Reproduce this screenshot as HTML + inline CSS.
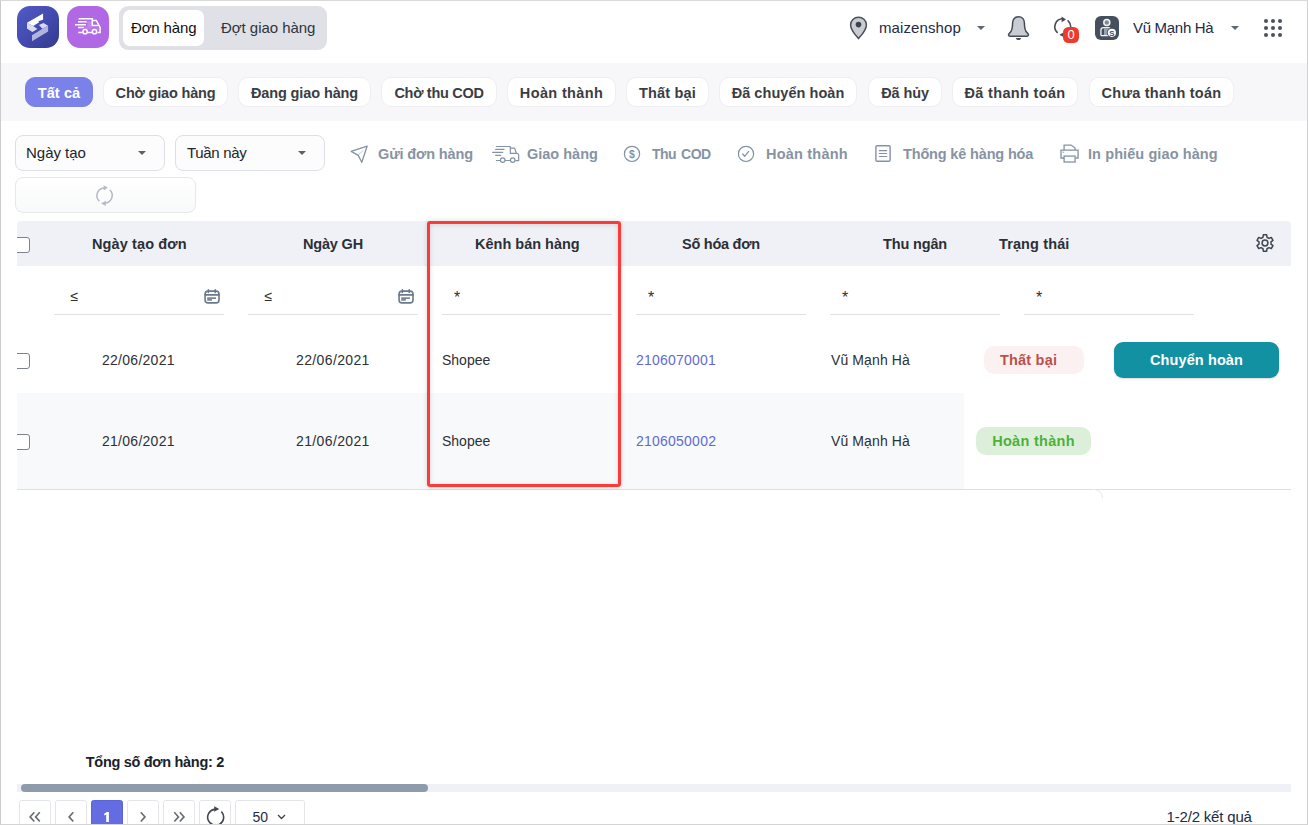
<!DOCTYPE html>
<html>
<head>
<meta charset="utf-8">
<style>
*{box-sizing:border-box;margin:0;padding:0}
html,body{width:1308px;height:825px;overflow:hidden;background:#fff}
body{font-family:"Liberation Sans",sans-serif;color:#212529;position:relative}
.abs{position:absolute}
.t{position:absolute;white-space:nowrap;line-height:20px;height:20px}
#frame{position:absolute;left:0;top:0;width:1308px;height:825px;border:1px solid #d4d4d4;border-color:#d9d9d9 #d0d0d0 #d4d4d4 #cccccc;z-index:50;pointer-events:none}
/* header */
.logo{position:absolute;top:6px;width:42px;height:42px;border-radius:13px}
#seg{position:absolute;left:119px;top:6px;width:208px;height:44px;border-radius:9px;background:#dfe1e6}
#segact{position:absolute;left:123px;top:10px;width:81px;height:36px;border-radius:7px;background:#fff}
/* band */
#band{position:absolute;left:0;top:63px;width:1308px;height:58px;background:#f7f7f9}
.pill{position:absolute;top:77px;height:30px;border-radius:10px;background:#fff;border:1px solid #eeeef2;font-weight:bold;font-size:14.5px;line-height:30px;letter-spacing:-0.5px;text-align:center;color:#3a3d42;white-space:nowrap}
.pill.act{background:#7a82ea;border-color:#7a82ea;color:#fff}
/* filters */
.sel{position:absolute;top:135px;height:36px;width:150px;border:1px solid #dcdfe5;border-radius:8px;background:#fcfcfd}
.sel span{position:absolute;left:10px;top:7px;font-size:15px;line-height:20px;color:#212529}
.sel i{position:absolute;right:18px;top:15px;border-left:4.500px solid transparent;border-right:4.500px solid transparent;border-top:4.500px solid #5a626c}
.tb{position:absolute;top:144px;font-weight:bold;font-size:14.5px;line-height:20px;color:#8793a3;white-space:nowrap}
/* table */
#thead{position:absolute;left:17px;top:221px;width:1274px;height:45px;background:#f0f1f6;border-radius:4px 4px 0 0}
.th{position:absolute;top:234px;font-weight:bold;font-size:14.5px;line-height:20px;color:#2b2f36;white-space:nowrap}
.fl{position:absolute;top:314px;height:1px;background:#dfe2e7;width:170px}
.td{position:absolute;font-size:14px;line-height:20px;color:#2d3035;white-space:nowrap}
.lnk{color:#5f6bd0}
.cb{position:absolute;left:14px;width:16px;height:16px;border:1px solid #7d838b;border-radius:3px;background:#fff}
.pg{position:absolute;top:800px;width:32px;height:34px;border:1px solid #e3e5e9;border-radius:2.500px;background:#fff}
.pg svg{display:block;margin:-1px 0 0 -1px}
.st{font-size:16px}
</style>
</head>
<body>
<!-- header -->
<div class="logo" id="logo1" style="left:17px;background:linear-gradient(135deg,#515bc8 0%,#434bb0 50%,#343a8e 100%)">
<svg width="42" height="42" viewBox="0 0 42 42"><polygon points="26.100,7.600 26.100,13.650 21.300,15.200 22.200,16.300 16.200,19.900 10,16.700" fill="#fff"/><polygon points="10,16.700 16.200,19.900 20.400,23 15.300,26 10,22.400" fill="#dcdcf0"/><polygon points="21.900,18.900 26.500,17.050 31.100,19.750 25.450,22.800" fill="#d7d7ee"/><polygon points="31.100,19.750 31.100,25.450 15,35.150 15,29.300 25.450,22.800" fill="#b3b4dc"/></svg>
</div>
<div class="logo" id="logo2" style="left:67px;background:#b068e4">
<svg width="42" height="42" viewBox="0 0 42 42" fill="none" stroke="#fff" stroke-width="1.500" stroke-linecap="square" stroke-linejoin="miter"><path d="M20.400 15.300h4.200v8.200h-7v-2.800h2.800z" fill="#c286ee" stroke="none"/><path d="M17.500 21.500h15v2.500h-15z" fill="#bb7aea" stroke="none"/><path d="M12.300 12.700h13v6.900h6.300M25.300 14.500h4l3.800 6.900v5h-1.900M11.800 15.800h7.200M8.700 18.700h9.600M11.800 21.600h4.400M12 26.400h2.800M21.400 26.400h2.800"/><circle cx="18.100" cy="25.700" r="2.100" fill="#b068e4"/><circle cx="27.500" cy="25.700" r="2.100" fill="#b068e4"/></svg>
</div>
<div id="seg"></div><div id="segact"></div>
<div class="t" id="sg1" style="left:131px;top:18px;font-size:15px;color:#111;letter-spacing:-0.15px">Đơn hàng</div>
<div class="t" id="sg2" style="left:221px;top:18px;font-size:15px;color:#2e3440;letter-spacing:-0.04px">Đợt giao hàng</div>

<div id="band"></div>
<div id="p1" class="pill act" style="left:25px;width:68px;letter-spacing:0.1px">Tất cả</div>
<div id="p2" class="pill" style="left:103px;width:125px;letter-spacing:-0.18px">Chờ giao hàng</div>
<div id="p3" class="pill" style="left:238px;width:133px;letter-spacing:-0.11px">Đang giao hàng</div>
<div id="p4" class="pill" style="left:381px;width:116px;letter-spacing:-0.3px">Chờ thu COD</div>
<div id="p5" class="pill" style="left:507px;width:109px;letter-spacing:0.36px">Hoàn thành</div>
<div id="p6" class="pill" style="left:626px;width:83px;letter-spacing:0.16px">Thất bại</div>
<div id="p7" class="pill" style="left:719px;width:138px;letter-spacing:0.05px">Đã chuyển hoàn</div>
<div id="p8" class="pill" style="left:868px;width:74px;letter-spacing:-0.1px">Đã hủy</div>
<div id="p9" class="pill" style="left:952px;width:126px;letter-spacing:0.33px">Đã thanh toán</div>
<div id="p10" class="pill" style="left:1089px;width:145px;letter-spacing:0.25px">Chưa thanh toán</div>


<!-- header right -->
<svg class="abs" style="left:849px;top:16px" width="19" height="24" viewBox="0 0 19 24"><path d="M9.5 1.2C5 1.2 1.6 4.6 1.6 8.9c0 5.2 5.6 11 7.9 13.6 2.3-2.6 7.9-8.4 7.9-13.6 0-4.3-3.4-7.7-7.9-7.7z" fill="#c9ccd2" stroke="#4a4f58" stroke-width="1.5"/><circle cx="9.5" cy="8.6" r="2.8" fill="#3d424b"/></svg>
<div class="t" id="shop" style="left:879px;top:18px;font-size:15px;color:#222b45;letter-spacing:0.11px">maizenshop</div>
<i class="abs" style="left:977px;top:26px;border-left:4px solid transparent;border-right:4px solid transparent;border-top:4.5px solid #5a6675"></i>
<svg class="abs" style="left:1006px;top:15px" width="26" height="26" viewBox="0 0 26 26"><path d="M12.500 1.700C8.900 1.700 6.600 4.500 6.600 8C6.600 12 6.300 15.500 4 17.600C2.600 18.900 2.300 19.400 2.600 20.200C2.900 21 3.600 21.300 4.600 21.300H20.400C21.400 21.300 22.100 21 22.400 20.200C22.700 19.400 22.400 18.900 21 17.600C18.700 15.500 18.400 12 18.400 8C18.400 4.500 16.100 1.700 12.500 1.700Z" fill="#c9cdd3" stroke="#454b55" stroke-width="1.500" stroke-linejoin="round"/><path d="M9.900 22.900h5.200c-.3 1.300-1.300 2.100-2.600 2.100s-2.300-.8-2.600-2.100z" fill="#454b55"/></svg>
<svg class="abs" style="left:1052px;top:16px" width="22" height="22" viewBox="0 0 22 22" fill="none" stroke="#454b55" stroke-width="1.600" stroke-linecap="round"><path d="M9.800 2.800A8 8 0 0 0 5.200 16.400"/><path d="M16.100 4.800A8 8 0 0 1 18.700 10.700"/><path d="M9.600 0.600l4.400 3-4.400 2.600z" fill="#454b55" stroke="none"/><path d="M11 16.800l-3.600 2 3.600 2z" fill="#454b55" stroke="none"/></svg>
<div class="abs" style="left:1063px;top:27px;width:16px;height:16px;border-radius:5.500px;background:#ee3a2c;color:#fff;font-size:13px;line-height:16px;text-align:center">0</div>
<div class="abs" style="left:1095px;top:16px;width:24px;height:24px;border-radius:6px;background:#454f5e"></div>
<svg class="abs" style="left:1095px;top:16px" width="24" height="24" viewBox="0 0 24 24" fill="none" stroke="#f4f5f7" stroke-width="1.300"><circle cx="11.800" cy="6.400" r="3" fill="#818a95" stroke-width="1.500"/><path d="M5.900 19.600v-5.400c0-1.500 1.200-2.600 2.700-2.600h4.600c1.300 0 2.200.600 2.600 1.600" fill="none"/><path d="M9 12.300h4.200c1 0 1.700.400 2.100 1.100-1.600.900-2.600 2.500-2.600 4.200 0 .700.200 1.400.500 2H9z" fill="#9ba4ae" stroke="none"/><path d="M5.900 19.600h7.500"/><circle cx="16.900" cy="16.800" r="5" fill="#454f5e" stroke="none"/><circle cx="16.900" cy="16.800" r="4.100" fill="#fff" stroke="none"/><text x="16.900" y="19.600" font-family="Liberation Sans" font-size="7.800" font-weight="bold" text-anchor="middle" fill="#454f5e" stroke="none">S</text></svg>
<div class="t" id="user" style="left:1133px;top:18px;font-size:15px;color:#222b45;letter-spacing:-0.3px">Vũ Mạnh Hà</div>
<i class="abs" style="left:1231px;top:26px;border-left:4px solid transparent;border-right:4px solid transparent;border-top:4.500px solid #5a6675"></i>
<svg class="abs" style="left:1263px;top:18px" width="20" height="20" viewBox="0 0 20 20" fill="#4a5361"><circle cx="3" cy="3" r="2.050"/><circle cx="10" cy="3" r="2.050"/><circle cx="17" cy="3" r="2.050"/><circle cx="3" cy="10" r="2.050"/><circle cx="10" cy="10" r="2.050"/><circle cx="17" cy="10" r="2.050"/><circle cx="3" cy="17" r="2.050"/><circle cx="10" cy="17" r="2.050"/><circle cx="17" cy="17" r="2.050"/></svg>

<!-- filters -->
<div class="sel" style="left:15px"><span id="se1" style="left:10px;letter-spacing:-0.02px">Ngày tạo</span><i></i></div>
<div class="sel" style="left:175px"><span id="se2" style="left:11px;letter-spacing:-0.33px">Tuần này</span><i></i></div>
<div class="abs" style="left:15px;top:177px;width:181px;height:36px;border:1px solid #e6e8ec;border-radius:8px;background:linear-gradient(#fff,#f8f9fa)"></div>
<svg class="abs" style="left:94px;top:185px" width="21" height="21" viewBox="0 0 21 21" fill="none" stroke="#b3bbc6" stroke-width="1.500" stroke-linecap="round"><path d="M9.600 2.950A7.650 7.650 0 0 0 4.900 15.700"/><path d="M16.200 5.300A7.700 7.700 0 0 1 11.600 18.100"/><path d="M9.600 0.300l4.300 2.400-4.300 2.700z" fill="#b3bbc6" stroke="none"/><path d="M11.800 15.800l-4.700 2.600 4.700 2.500z" fill="#b3bbc6" stroke="none"/></svg>

<!-- toolbar -->
<svg class="abs" style="left:350px;top:145px" width="19" height="19" viewBox="0 0 19 19" fill="none" stroke="#8392a5" stroke-width="1.300" stroke-linejoin="round" stroke-linecap="round"><path d="M17.100 1.200L1.200 6.400l7 4 3.600 6.900z"/><path d="M8.600 9.800l4.600-4.400" stroke-width=".8" opacity=".6"/></svg>
<div id="tb1" class="tb" style="left:378px;letter-spacing:-0.14px">Gửi đơn hàng</div>
<svg class="abs" style="left:492px;top:145px" width="28" height="19" viewBox="0 0 28 19" fill="none" stroke="#8392a5" stroke-width="1.200" stroke-linecap="round" stroke-linejoin="round"><path d="M4.400 1.500h13.900v6.900h6.300M18.300 3.100h4.200l1.900 5.100c1.400.400 2.300 1 2.300 1.800v5.600h-2.900M3.700 4.400h8.300M0.700 7.400h10M3.700 10.400h5M4.400 15.500h3.800M13.600 15.500h4.400"/><circle cx="10.700" cy="15.100" r="2.300"/><circle cx="20.700" cy="15.100" r="2.300"/></svg>
<div id="tb2" class="tb" style="left:527px;letter-spacing:0px">Giao hàng</div>
<svg class="abs" style="left:623px;top:145px" width="18" height="18" viewBox="0 0 18 18" fill="none" stroke="#8392a5" stroke-width="1.200"><circle cx="9" cy="8.900" r="7.600"/><text x="9" y="12.600" font-family="Liberation Sans" font-size="10.500" font-weight="bold" text-anchor="middle" fill="#8392a5" stroke="none">$</text></svg>
<div id="tb3" class="tb" style="left:652px;font-size:14px;word-spacing:1.5px;letter-spacing:-0.5px">Thu COD</div>
<svg class="abs" style="left:737px;top:145px" width="18" height="18" viewBox="0 0 18 18" fill="none" stroke="#8392a5" stroke-width="1.200" stroke-linecap="round" stroke-linejoin="round"><circle cx="9" cy="8.900" r="7.600"/><path d="M5.700 8.900l1.900 2.400 4.100-4.900" stroke-width="1.300"/></svg>
<div id="tb4" class="tb" style="left:766px;letter-spacing:0.21px">Hoàn thành</div>
<svg class="abs" style="left:874px;top:144px" width="18" height="19" viewBox="0 0 18 19" fill="none" stroke="#8392a5" stroke-width="1.400" stroke-linecap="round"><rect x="1.900" y="1.700" width="14.200" height="15.500" rx="1.200"/><path d="M5.400 6.600h7.300M5.400 9.500h7.300M5.400 12.500h7.300" stroke-width="1.200"/></svg>
<div id="tb5" class="tb" style="left:903px;letter-spacing:-0.16px">Thống kê hàng hóa</div>
<svg class="abs" style="left:1059px;top:143px" width="21" height="22" viewBox="0 0 21 22" fill="none" stroke="#8392a5" stroke-width="1.300" stroke-linejoin="miter"><path d="M5.100 7.200V2.100h7l4 3v2.100"/><path d="M5.100 15H2V7.200h17.100V15h-2.400"/><rect x="5.100" y="13.100" width="11" height="5.900"/><rect x="3.700" y="8.700" width="1.400" height="1" fill="#8392a5" stroke="none"/></svg>
<div id="tb6" class="tb" style="left:1088px;letter-spacing:0.09px">In phiếu giao hàng</div>
<!-- table -->
<div id="thead"></div>
<div class="abs" style="left:17px;top:393px;width:947px;height:96px;background:#f8f9fb"></div>
<div class="abs" style="left:17px;top:489px;width:1274px;height:1px;background:#dcdfe6"></div>
<div class="abs" style="left:1092px;top:489px;width:11px;height:9px;border-top:1px solid #e6e8ed;border-right:1px solid #e6e8ed;border-top-right-radius:9px"></div>
<div class="abs" style="left:17px;top:221px;width:20px;height:270px;overflow:hidden">
<div class="cb" style="left:-3px;top:16px"></div>
<div class="cb" style="left:-3px;top:132px"></div>
<div class="cb" style="left:-3px;top:213px"></div>
</div>
<div class="th" id="h1" style="left:92px;letter-spacing:0.11px">Ngày tạo đơn</div>
<div class="th" id="h2" style="left:303px;letter-spacing:-0.18px">Ngày GH</div>
<div class="th" id="h3" style="left:475px;letter-spacing:-0px">Kênh bán hàng</div>
<div class="th" id="h4" style="left:682px;letter-spacing:-0.25px">Số hóa đơn</div>
<div class="th" id="h5" style="left:883px;letter-spacing:-0.15px">Thu ngân</div>
<div class="th" id="h6" style="left:999px;letter-spacing:0.12px">Trạng thái</div>
<svg class="abs" style="left:1254px;top:232px" width="22" height="22" viewBox="0 0 22 22" fill="none" stroke="#3f4650" stroke-width="1.500" stroke-linejoin="round"><circle cx="11" cy="11" r="2.900"/><path d="M9.01 5.23L9.33 2.77L12.67 2.77L12.99 5.23L15.00 6.40L17.29 5.43L18.97 8.33L16.99 9.84L16.99 12.16L18.97 13.67L17.29 16.57L15.00 15.60L12.99 16.77L12.67 19.23L9.33 19.23L9.01 16.77L7.00 15.60L4.71 16.57L3.03 13.67L5.01 12.16L5.01 9.84L3.03 8.33L4.71 5.43L7.00 6.40Z"/></svg>

<div class="fl" style="left:54px"></div><div class="fl" style="left:248px"></div><div class="fl" style="left:442px"></div><div class="fl" style="left:636px"></div><div class="fl" style="left:830px"></div><div class="fl" style="left:1024px"></div>
<div class="td" style="left:70.5px;top:286px;font-size:14px">≤</div>
<div class="td" style="left:264.5px;top:286px;font-size:14px">≤</div>
<svg class="abs" style="left:203px;top:288px" width="18" height="17" viewBox="0 0 18 17" fill="none" stroke="#6a798b" stroke-width="1.600" stroke-linecap="round"><rect x="2.100" y="3.100" width="13.900" height="11.800" rx="3"/><path d="M2.100 6.900h13.900M5.400 1.800v2.700M12.200 1.800v2.700"/><path d="M4.200 9.300h8.800v1.700h-4.100v1.800h-4.700z" fill="#7b8998" stroke="none"/></svg><svg class="abs" style="left:397px;top:288px" width="18" height="17" viewBox="0 0 18 17" fill="none" stroke="#6a798b" stroke-width="1.600" stroke-linecap="round"><rect x="2.100" y="3.100" width="13.900" height="11.800" rx="3"/><path d="M2.100 6.900h13.900M5.400 1.800v2.700M12.200 1.800v2.700"/><path d="M4.200 9.300h8.800v1.700h-4.100v1.800h-4.700z" fill="#7b8998" stroke="none"/></svg>
<div class="td st" style="left:454px;top:288px">*</div>
<div class="td st" style="left:648px;top:288px">*</div>
<div class="td st" style="left:842px;top:288px">*</div>
<div class="td st" style="left:1036px;top:288px">*</div>

<div class="td" id="d1" style="left:102px;top:350px;letter-spacing:0.27px">22/06/2021</div>
<div class="td" id="d2" style="left:296px;top:350px;letter-spacing:0.37px">22/06/2021</div>
<div class="td" id="s1" style="left:442px;top:350px;letter-spacing:0px">Shopee</div>
<div class="td lnk" id="l1" style="left:636px;top:350px;letter-spacing:0.22px">2106070001</div>
<div class="td" id="u1" style="left:831px;top:350px;letter-spacing:0.11px">Vũ Mạnh Hà</div>
<div class="abs" style="left:984px;top:346px;width:100px;height:28px;border-radius:10px;background:#fbf1f0"></div><div id="b1" class="t" style="left:1000px;top:350px;color:#b9524c;font-weight:bold;font-size:14.5px;letter-spacing:0.19px">Thất bại</div>
<div id="b2" class="abs" style="left:1114px;top:342px;width:165px;height:36px;border-radius:9px;background:#1291a3;color:#fff;font-weight:bold;font-size:14.5px;line-height:36px;text-align:center;box-shadow:0 1px 2px rgba(0,0,0,.15);letter-spacing:0.1px">Chuyển hoàn</div>

<div class="td" id="d3" style="left:102px;top:431px;letter-spacing:0.27px">21/06/2021</div>
<div class="td" id="d4" style="left:296px;top:431px;letter-spacing:0.37px">21/06/2021</div>
<div class="td" id="s2" style="left:442px;top:431px;letter-spacing:0px">Shopee</div>
<div class="td lnk" id="l2" style="left:636px;top:431px;letter-spacing:0.23px">2106050002</div>
<div class="td" id="u2" style="left:831px;top:431px;letter-spacing:0.11px">Vũ Mạnh Hà</div>
<div id="b3" class="abs" style="left:976px;top:427px;width:115px;height:28px;border-radius:10px;background:#dcf0d9;color:#4db03c;font-weight:bold;font-size:14.5px;line-height:28px;text-align:center;letter-spacing:0.29px">Hoàn thành</div>

<!-- red highlight -->
<div class="abs" style="left:427px;top:221px;width:194px;height:266px;border:3px solid #fb3a3a;border-radius:3px;box-shadow:0 0 5px rgba(0,0,0,.16),inset 0 1px 5px rgba(0,0,0,.13)"></div>

<!-- footer -->
<div class="t" id="tot" style="left:85.8px;top:752px;font-size:14.5px;font-weight:bold;color:#1b202b;letter-spacing:-0.31px">Tổng số đơn hàng: 2</div>
<div class="abs" style="left:17px;top:784px;width:1274px;height:8px;background:#f0f1f6"></div>
<div class="abs" style="left:21px;top:784px;width:407px;height:8px;border-radius:4px;background:#8e9baa"></div>
<div class="pg" style="left:19px"><svg width="31" height="34" viewBox="0 0 31 34" fill="none" stroke="#666c75" stroke-width="1.600"><path d="M15.300 12.300l-4.200 4.600 4.200 4.600M20.800 12.300l-4.200 4.600 4.200 4.600"/></svg></div>
<div class="pg" style="left:55px"><svg width="31" height="34" viewBox="0 0 31 34" fill="none" stroke="#666c75" stroke-width="1.600"><path d="M18.300 12.300l-4.200 4.600 4.200 4.600"/></svg></div>
<div class="pg" style="left:91px;background:#636ce0;border-color:#5c64dc"><svg width="32" height="34" viewBox="0 0 32 34"><path d="M17.900 12H15.700L12.900 14.100L13.700 15.600L15.200 14.600V22.100H17.900Z" fill="#fff"/></svg></div>
<div class="pg" style="left:127px"><svg width="31" height="34" viewBox="0 0 31 34" fill="none" stroke="#666c75" stroke-width="1.600"><path d="M13.800 12.300l4.200 4.600-4.200 4.600"/></svg></div>
<div class="pg" style="left:163px"><svg width="31" height="34" viewBox="0 0 31 34" fill="none" stroke="#666c75" stroke-width="1.600"><path d="M11.300 12.300l4.200 4.600-4.200 4.600M16.800 12.300l4.200 4.600-4.200 4.600"/></svg></div>
<div class="pg" style="left:199px"><svg width="32" height="34" viewBox="0 0 32 34" fill="none" stroke="#414852" stroke-width="1.600" stroke-linecap="round"><path d="M15.200 9.350A8 8 0 1 0 22.700 12"/><path d="M15.200 6.200l5.100 2.800-5.100 2.800z" fill="#414852" stroke="none"/></svg></div>
<div class="pg" style="left:235px;width:70px"><span style="position:absolute;left:16.5px;top:6px;font-size:14px;line-height:20px;color:#222b45">50</span><svg style="position:absolute;left:42px;top:13px" width="9" height="8" viewBox="0 0 9 8" fill="none" stroke="#3d434c" stroke-width="1.300"><path d="M1 2l3.500 3.500L8 2"/></svg></div>
<div class="t" id="res" style="left:1166.6px;top:807px;font-size:15px;color:#222b45;letter-spacing:-0.19px">1-2/2 kết quả</div>

<div id="frame"></div>
</body>
</html>
